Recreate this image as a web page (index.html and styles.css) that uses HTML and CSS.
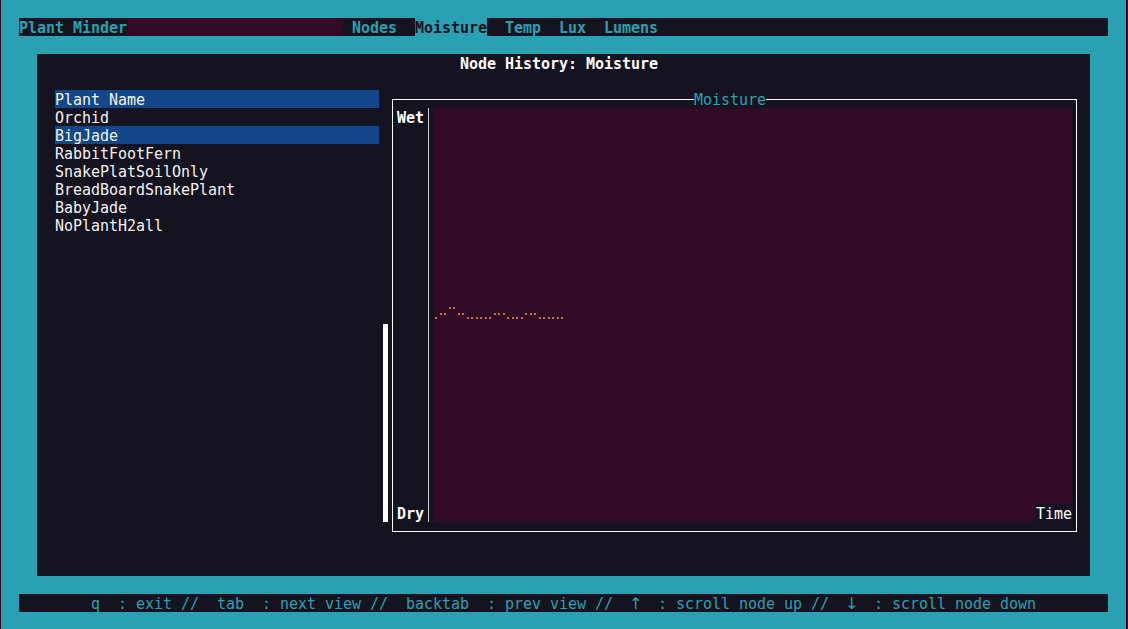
FILE: index.html
```html
<!DOCTYPE html>
<html>
<head>
<meta charset="utf-8">
<title>Plant Minder</title>
<link rel="stylesheet" href="styles.css">
</head>
<body>
<div class="term">
  <div class="topbar">
    <span class="seg">Plant Minder</span>
    <span class="fill"></span>
    <span class="seg"> Nodes  </span>
    <span class="seg active">Moisture</span>
    <span class="seg">  Temp  Lux  Lumens</span>
  </div>

  <div class="panel">
    <div class="title">Node History: Moisture</div>
    <div class="content">
      <div class="list">
        <div class="item sel">Plant Name</div>
        <div class="item">Orchid</div>
        <div class="item sel">BigJade</div>
        <div class="item">RabbitFootFern</div>
        <div class="item">SnakePlatSoilOnly</div>
        <div class="item">BreadBoardSnakePlant</div>
        <div class="item">BabyJade</div>
        <div class="item">NoPlantH2all</div>
      </div>
      <div class="scroll"><div class="thumb"></div></div>
      <div class="chart">
        <div class="frame">
          <div class="legend">Moisture</div>
          <div class="ylab"><span class="lab">Wet</span><span class="lab">Dry</span></div>
          <div class="axis"><div class="axisline"></div></div>
          <div class="plot">
            <div class="area">
              <svg class="dots" width="639" height="396" viewBox="0 0 639 396">
                <g fill="#b87639">
                  <rect x="2" y="209" width="2" height="2"/>
                  <rect x="7" y="205" width="2" height="2"/>
                  <rect x="11" y="205" width="2" height="2"/>
                  <rect x="16" y="199" width="2" height="2"/>
                  <rect x="20" y="199" width="2" height="2"/>
                  <rect x="25" y="205" width="2" height="2"/>
                  <rect x="29" y="205" width="2" height="2"/>
                  <rect x="34" y="209" width="2" height="2"/>
                  <rect x="38" y="209" width="2" height="2"/>
                  <rect x="43" y="209" width="2" height="2"/>
                  <rect x="47" y="209" width="2" height="2"/>
                  <rect x="52" y="209" width="2" height="2"/>
                  <rect x="56" y="209" width="2" height="2"/>
                  <rect x="61" y="205" width="2" height="2"/>
                  <rect x="65" y="205" width="2" height="2"/>
                  <rect x="70" y="205" width="2" height="2"/>
                  <rect x="74" y="209" width="2" height="2"/>
                  <rect x="79" y="209" width="2" height="2"/>
                  <rect x="83" y="209" width="2" height="2"/>
                  <rect x="88" y="209" width="2" height="2"/>
                  <rect x="92" y="205" width="2" height="2"/>
                  <rect x="97" y="205" width="2" height="2"/>
                  <rect x="101" y="205" width="2" height="2"/>
                  <rect x="106" y="209" width="2" height="2"/>
                  <rect x="110" y="209" width="2" height="2"/>
                  <rect x="115" y="209" width="2" height="2"/>
                  <rect x="119" y="209" width="2" height="2"/>
                  <rect x="124" y="209" width="2" height="2"/>
                  <rect x="128" y="209" width="2" height="2"/>
                </g>
              </svg>
            </div>
            <div class="xrow"><div class="xfill"></div><div class="xtitle">Time</div></div>
          </div>
        </div>
      </div>
    </div>
  </div>

  <div class="footer">q  : exit //  tab  : next view //  backtab  : prev view //  <span class="arr">↑</span>  : scroll node up //  <span class="arr">↓</span>  : scroll node down</div>
</div>
</body>
</html>
```
FILE: styles.css
```css
html, body {
  margin: 0;
  padding: 0;
}
body {
  background: #300a24;
  height: 629px;
  overflow: hidden;
}
.term {
  margin-left: 1px;
  width: 1125px;
  height: 629px;
  box-sizing: border-box;
  padding-top: 18px;
  background: #29a1b2;
  font-family: "DejaVu Sans Mono", "Liberation Mono", monospace;
  font-size: 15px;
  line-height: 20px;
  letter-spacing: -0.03px;
  display: flex;
  flex-direction: column;
  gap: 18px;
}

/* top tab bar */
.topbar {
  margin-left: 18px;
  width: 1089px;
  height: 18px;
  flex: none;
  background: #15131f;
  color: #29a1b2;
  font-weight: bold;
  display: flex;
}
.seg {
  flex: none;
  height: 18px;
  white-space: pre;
}
.fill {
  flex: none;
  width: 216px;
  height: 18px;
  background: #330a25;
}
.active {
  background: #29a1b2;
  color: #15131f;
}

/* main panel */
.panel {
  margin-left: 36px;
  width: 1053px;
  height: 522px;
  flex: none;
  background: #15131f;
  display: flex;
  flex-direction: column;
}
.title {
  height: 18px;
  padding-left: 423px;
  color: #ffffff;
  font-weight: bold;
  white-space: pre;
}
.content {
  margin-top: 18px;
  height: 450px;
  padding-left: 18px;
  display: flex;
}
.list {
  width: 324px;
  flex: none;
  display: flex;
  flex-direction: column;
}
.item {
  height: 18px;
  color: #f2f2f2;
  white-space: pre;
}
.item.sel {
  background: #12478a;
}
.scroll {
  width: 9px;
  flex: none;
  display: flex;
  flex-direction: column;
}
.thumb {
  margin-top: 234px;
  margin-left: 4px;
  width: 5px;
  height: 198px;
  background: #ffffff;
}

/* chart block */
.chart {
  width: 693px;
  height: 450px;
  flex: none;
  display: flex;
  flex-direction: column;
}
.frame {
  position: relative;
  margin: 9px 4px 8px 4px;
  height: 433px;
  box-sizing: border-box;
  border: 1px solid #ffffff;
  padding: 8px 4px 9px 4px;
  display: flex;
}
.legend {
  position: absolute;
  top: -10px;
  left: 301px;
  height: 18px;
  background: #15131f;
  color: #29a1b2;
  white-space: pre;
}
.ylab {
  width: 27px;
  flex: none;
  display: flex;
  flex-direction: column;
  justify-content: space-between;
  color: #ffffff;
  font-weight: bold;
}
.lab {
  display: block;
  height: 18px;
}
.axis {
  width: 9px;
  flex: none;
  display: flex;
}
.axisline {
  margin-left: 4px;
  width: 1px;
  background: #cfcfcf;
}
.plot {
  width: 639px;
  flex: none;
  display: flex;
  flex-direction: column;
}
.area {
  height: 396px;
  background: #330a25;
}
.dots {
  display: block;
}
.xrow {
  height: 18px;
  display: flex;
}
.xfill {
  flex: 1;
  background: #330a25;
}
.xtitle {
  flex: none;
  height: 18px;
  color: #ffffff;
  background: #15131f;
}

/* footer */
.footer {
  margin-left: 18px;
  width: 1089px;
  height: 18px;
  flex: none;
  background: #15131f;
  color: #29a1b2;
  text-align: center;
  white-space: pre;
  overflow: hidden;
}
.arr {
  display: inline-block;
  width: 9px;
  height: 18px;
  vertical-align: top;
  text-align: left;
  text-indent: -2px;
  letter-spacing: -4.4px;
  font-family: "DejaVu Sans", sans-serif;
  font-size: 16px;
}
```
